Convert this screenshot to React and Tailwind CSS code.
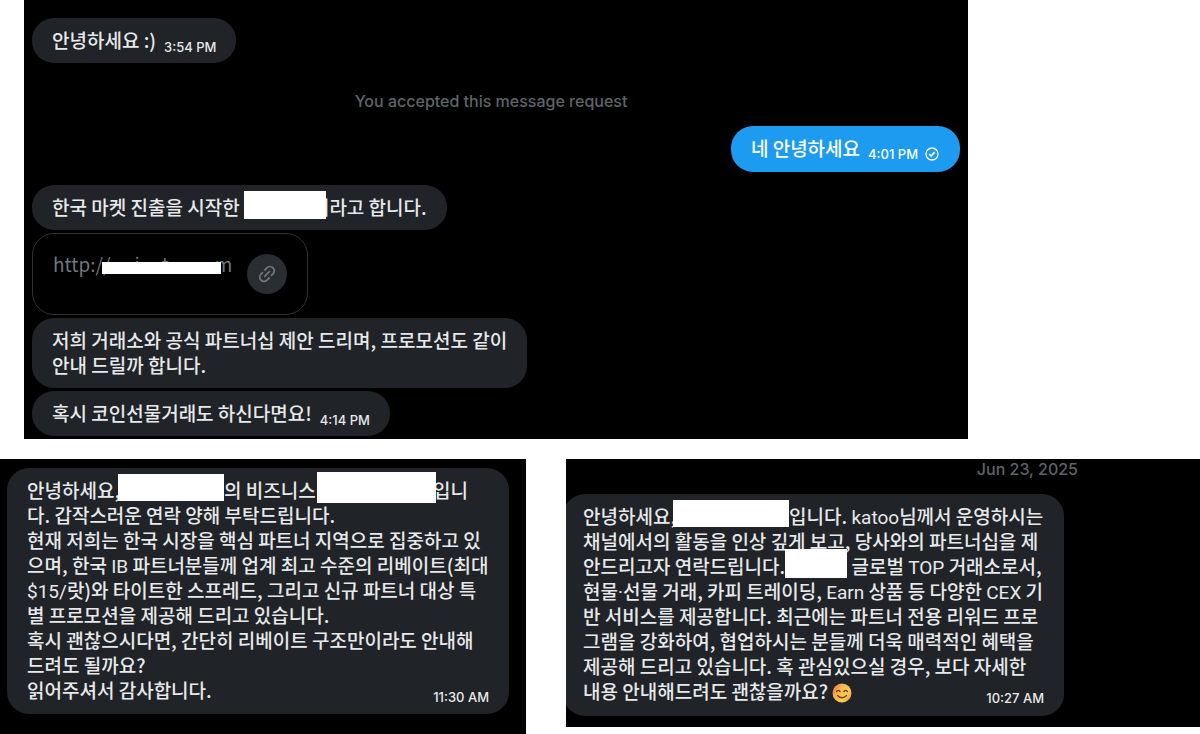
import React from "react";
import clsx from "clsx";

const FONT = "font-['Noto_Sans_CJK_KR',sans-serif]";

const CheckIcon = () => (
  <svg viewBox="0 0 16 16" className="w-4 h-4" fill="none" stroke="currentColor" aria-label="Sent">
    <circle cx="8" cy="8" r="6" strokeWidth="1.3" />
    <path d="M5.3 8.2 7.2 10l3.5-4" strokeWidth="1.7" />
  </svg>
);

const LinkIcon = () => (
  <svg
    viewBox="0 0 24 24"
    className="w-5 h-5"
    fill="none"
    stroke="currentColor"
    strokeWidth="2.2"
    aria-hidden="true"
  >
    <path d="M8.8 7.8 12 4.6a5 5 0 0 1 7.2 7.2l-2.4 2.4" />
    <path d="M15.2 16.2 12 19.4A5 5 0 0 1 4.8 12.2l2.4-2.4" />
    <path d="m8.6 15.4 6.8-6.8" />
  </svg>
);

const SmileEmoji = () => (
  <svg viewBox="0 0 20 20" className="inline-block w-5 h-5 align-[-4px]" role="img" aria-label="smile">
    <defs>
      <linearGradient id="face" x1="0" y1="0.2" x2="1" y2="0.8">
        <stop offset="0" stopColor="#f0744a" />
        <stop offset="0.3" stopColor="#f9b052" />
        <stop offset="0.7" stopColor="#ffcc4d" />
        <stop offset="1" stopColor="#f39a4b" />
      </linearGradient>
    </defs>
    <circle cx="10" cy="10" r="9.5" fill="url(#face)" />
    <g fill="none" stroke="#6b4019" strokeWidth="1.4" strokeLinecap="round">
      <path d="M4.6 8.6c.7-1.6 2.7-1.6 3.4 0" />
      <path d="M12 8.6c.7-1.6 2.7-1.6 3.4 0" />
      <path d="M5.6 12.6c2 2.8 6.8 2.8 8.8 0" />
    </g>
  </svg>
);

// white block over a hidden name
const Redacted = ({ className }) => (
  <span
    className={clsx("relative z-10 inline-block bg-white -mt-3 -mb-[2px] align-middle", className)}
  />
);

const Latin = ({ children }) => (
  <span className="font-['Roboto',sans-serif] font-normal leading-none">{children}</span>
);

const Time = ({ children, sent }) => (
  <span className="-mb-[2px] flex items-center gap-[6px] font-['Inter',sans-serif] text-[13px] leading-[14px] font-medium">
    <time>{children}</time>
    {sent && <CheckIcon />}
  </span>
);

const Bubble = ({ children, time, sent, className }) => (
  <div
    className={clsx(
      "rounded-[22px] px-5 pt-[9px] text-[19px] leading-[25px] font-medium whitespace-nowrap",
      sent ? "self-end bg-[#1d9bf0] text-white" : "bg-[#202327] text-[#e7e9ea]",
      className || "pb-[11px]",
    )}
  >
    {time ? (
      <div className="flex items-end gap-2">
        <span>{children}</span>
        <Time sent={sent}>{time}</Time>
      </div>
    ) : (
      children
    )}
  </div>
);

// multi-line message, the time sits at the end of the last line
const LongBubble = ({ lines, time, className }) => (
  <Bubble className={className}>
    {lines.map((line, i) =>
      i === lines.length - 1 ? (
        <div key={i} className="flex items-end justify-between">
          <p>{line}</p>
          <Time>{time}</Time>
        </div>
      ) : (
        <p key={i}>{line}</p>
      ),
    )}
  </Bubble>
);

const LinkCard = () => (
  <a
    href="#"
    className="flex w-[276px] h-[82px] items-center justify-between rounded-[22px] border border-[#2f3336] px-5 text-[#71767b]"
  >
    <span className="relative mb-[22px] flex text-[19px] leading-[25px]">
      http://
      <span className="ml-6">i</span>
      <span className="ml-[22px]">t</span>
      <span className="ml-[46px]">m</span>
      <span className="absolute left-[49px] top-[11px] h-3 w-[119px] bg-white" />
    </span>
    <span className="flex w-10 h-10 items-center justify-center rounded-full bg-[#2a2d31]">
      <LinkIcon />
    </span>
  </a>
);

const businessLines = [
  <>
    안녕하세요,
    <Redacted className="w-[106px] h-[27px] -ml-[2px]" />의 비즈니스{" "}
    <Redacted className="w-[119px] h-[31px] -ml-[3px] -mr-[3px]" />
    입니
  </>,
  "다. 갑작스러운 연락 양해 부탁드립니다.",
  "현재 저희는 한국 시장을 핵심 파트너 지역으로 집중하고 있",
  <>
    으며, 한국 <Latin>IB</Latin> 파트너분들께 업계 최고 수준의 리베이트(최대
  </>,
  <>
    <Latin>$15/</Latin>랏)와 타이트한 스프레드, 그리고 신규 파트너 대상 특
  </>,
  "별 프로모션을 제공해 드리고 있습니다.",
  "혹시 괜찮으시다면, 간단히 리베이트 구조만이라도 안내해",
  "드려도 될까요?",
  "읽어주셔서 감사합니다.",
];

const exchangeLines = [
  <>
    안녕하세요,
    <Redacted className="w-[116px] h-[27px] -ml-[3px]" />
    입니다. <Latin>katoo</Latin>님께서 운영하시는
  </>,
  "채널에서의 활동을 인상 깊게 보고, 당사와의 파트너십을 제",
  <>
    안드리고자 연락드립니다.
    <Redacted className="w-[62px] h-[29px]" /> 글로벌 <Latin>TOP</Latin> 거래소로서,
  </>,
  <>
    현물<Latin>·</Latin>선물 거래, 카피 트레이딩, <Latin>Earn</Latin> 상품 등 다양한{" "}
    <Latin>CEX</Latin> 기
  </>,
  "반 서비스를 제공합니다. 최근에는 파트너 전용 리워드 프로",
  "그램을 강화하여, 협업하시는 분들께 더욱 매력적인 혜택을",
  "제공해 드리고 있습니다. 혹 관심있으실 경우, 보다 자세한",
  <>
    내용 안내해드려도 괜찮을까요? <SmileEmoji />
  </>,
];

const App = () => {
  return (
    <main className={clsx("min-h-screen bg-white", FONT)}>
      {/* FIRST CHAT */}
      <section className="ml-6 mr-[232px] flex flex-col items-start gap-[3px] bg-black px-2 pt-[18px] pb-[3px]">
        <Bubble time="3:54 PM">안녕하세요 :)</Bubble>

        <p className="w-full pt-[23px] pb-[9px] pr-[10px] text-center font-['Inter',sans-serif] text-[16px] leading-[25px] font-medium text-[#5f6468]">
          You accepted this message request
        </p>

        <Bubble time="4:01 PM" sent className="mb-[10px] pb-3">
          네 안녕하세요
        </Bubble>

        <Bubble>
          한국 마켓 진출을 시작한 <Redacted className="w-[82px] h-[28px] -mr-[14px]" />
          저라고 합니다.
        </Bubble>

        <LinkCard />

        <Bubble>
          <p>저희 거래소와 공식 파트너십 제안 드리며, 프로모션도 같이</p>
          <p>안내 드릴까 합니다.</p>
        </Bubble>

        <Bubble time="4:14 PM">혹시 코인선물거래도 하신다면요!</Bubble>
      </section>

      <div className="mt-5 grid grid-cols-[526fr_634fr] items-start gap-10">
        {/* BUSINESS CHAT */}
        <section className="min-w-0 bg-black pl-[7px] pr-[17px] pt-[9px] pb-5">
          <LongBubble className="pb-3" lines={businessLines} time="11:30 AM" />
        </section>

        {/* EXCHANGE CHAT */}
        <section className="min-w-0 overflow-hidden bg-black pb-[11px] pr-[136px]">
          <p className="-mr-[14px] mb-[14px] text-right font-['Inter',sans-serif] text-[16px] leading-[21px] font-medium text-[#5f6468]">
            <time>Jun 23, 2025</time>
          </p>
          <LongBubble className="-ml-[3px] pb-[13px]" lines={exchangeLines} time="10:27 AM" />
        </section>
      </div>
    </main>
  );
};

export default App;
